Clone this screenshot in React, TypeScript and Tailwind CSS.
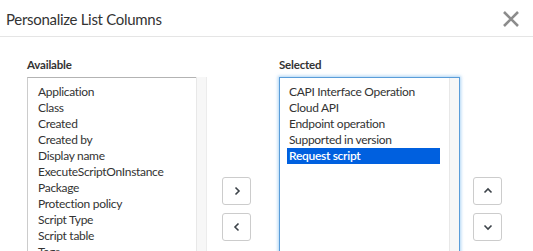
import React from "react";

const available = [
  "Application",
  "Class",
  "Created",
  "Created by",
  "Display name",
  "ExecuteScriptOnInstance",
  "Package",
  "Protection policy",
  "Script Type",
  "Script table",
  "Tags",
  "Updated",
];

const selected = [
  "CAPI Interface Operation",
  "Cloud API",
  "Endpoint operation",
  "Supported in version",
  "Request script",
];

function Btn({ children }: { children: React.ReactNode }) {
  return (
    <div className="w-[29px] h-[28px] border border-[#cccccc] rounded-[3px] bg-white flex items-center justify-center text-[#444b52]">
      {children}
    </div>
  );
}

export default function App() {
  return (
    <div
      className="w-[533px] h-[251px] overflow-hidden bg-white text-[#333333]"
      style={{ fontFamily: "Lato, 'Open Sans', sans-serif" }}
    >
      <div className="h-[37px] border-b border-[#e5e5e5] flex items-center justify-between pl-[6px] pr-[13px]">
        <div className="text-[15px] leading-[20px] tracking-[-0.3px] text-[#333] mt-[1px]">Personalize List Columns</div>
        <svg width="18" height="18" viewBox="0 0 18 18" className="mt-[1px]">
          <path d="M2 2 L16 16 M16 2 L2 16" stroke="#8c8c8c" strokeWidth="2.6" strokeLinecap="butt" />
        </svg>
      </div>
      <div className="flex items-start pl-[27px] pt-[20px]">
        <div className="flex flex-col w-[180px]">
          <div className="text-[11.5px] font-bold leading-[16px] h-[20px] tracking-[-0.2px]">Available</div>
          <div className="flex h-[200px] border border-[#cccccc] border-t-[#b3b3b3] border-r-0">
            <div className="flex-1 pl-[10px] pt-[6px] text-[12px] tracking-[-0.3px] leading-[16px]">
              {available.map((a) => (
                <div key={a} className="whitespace-nowrap">{a}</div>
              ))}
            </div>
            <div className="w-[11px] -mt-px bg-[#f7f7f7] border-l border-[#e8e8e8] border-r border-r-[#ececec]" />
          </div>
        </div>
        <div className="flex flex-col gap-[8px] ml-[15px] mt-[120px]">
          <Btn>
            <svg width="10" height="12" viewBox="0 0 10 12"><path d="M3.5 2.5 L7 6 L3.5 9.5" fill="none" stroke="#3d4349" strokeWidth="1.6" /></svg>
          </Btn>
          <Btn>
            <svg width="10" height="12" viewBox="0 0 10 12"><path d="M6.5 2.5 L3 6 L6.5 9.5" fill="none" stroke="#3d4349" strokeWidth="1.6" /></svg>
          </Btn>
        </div>
        <div className="flex flex-col w-[181px] ml-[28px]">
          <div className="text-[11.5px] font-bold leading-[16px] h-[20px] tracking-[-0.2px]">Selected</div>
          <div className="flex h-[200px] border border-[#5b9dd9] shadow-[0_0_3px_1px_rgba(102,175,233,0.55)]">
            <div className="flex-1 pl-[7px] pr-[9px] pt-[6px] text-[12px] tracking-[-0.3px] leading-[16px]">
              {selected.map((a, i) => (
                <div
                  key={a}
                  className={
                    "whitespace-nowrap pl-[2px] " +
                    (i === selected.length - 1 ? "bg-[#0060df] text-white font-semibold" : "")
                  }
                >
                  {a}
                </div>
              ))}
            </div>
            <div className="w-[10px] bg-[#f7f7f7] border-l border-[#e8e8e8]" />
          </div>
        </div>
        <div className="flex flex-col gap-[8px] ml-[13px] mt-[120px]">
          <Btn>
            <svg width="12" height="10" viewBox="0 0 12 10"><path d="M2.5 6.5 L6 3 L9.5 6.5" fill="none" stroke="#3d4349" strokeWidth="1.6" /></svg>
          </Btn>
          <Btn>
            <svg width="12" height="10" viewBox="0 0 12 10"><path d="M2.5 3.5 L6 7 L9.5 3.5" fill="none" stroke="#3d4349" strokeWidth="1.6" /></svg>
          </Btn>
        </div>
      </div>
    </div>
  );
}
